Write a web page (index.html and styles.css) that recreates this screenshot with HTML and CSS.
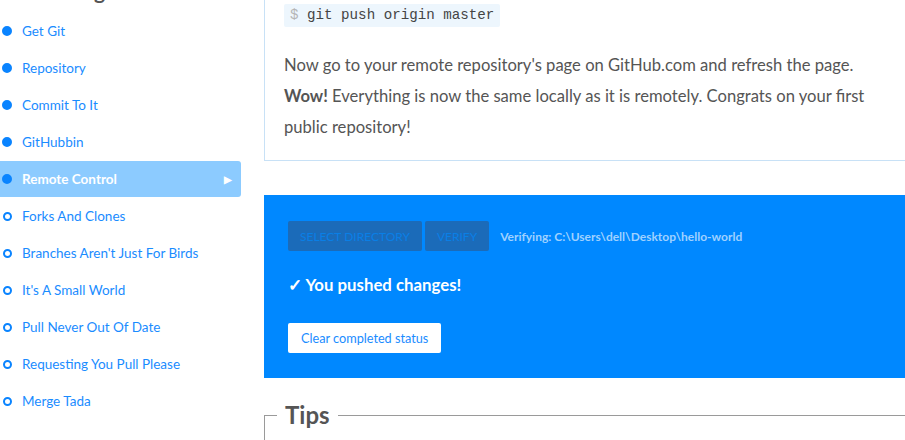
FILE: index.html
```html
<!DOCTYPE html>
<html>
<head>
<meta charset="utf-8">
<link rel="stylesheet" href="styles.css">
</head>
<body>
<div class="page">
  <aside class="sidebar">
    <h2 class="side-title">Challenges</h2>
    <ul class="chapters">
      <li class="chapter done"><span class="dot"></span><span class="label">Get Git</span></li>
      <li class="chapter done"><span class="dot"></span><span class="label">Repository</span></li>
      <li class="chapter done"><span class="dot"></span><span class="label">Commit To It</span></li>
      <li class="chapter done"><span class="dot"></span><span class="label">GitHubbin</span></li>
      <li class="chapter done current"><span class="dot"></span><span class="label">Remote Control</span><span class="arrow">&#9654;</span></li>
      <li class="chapter"><span class="dot"></span><span class="label">Forks And Clones</span></li>
      <li class="chapter"><span class="dot"></span><span class="label">Branches Aren't Just For Birds</span></li>
      <li class="chapter"><span class="dot"></span><span class="label">It's A Small World</span></li>
      <li class="chapter"><span class="dot"></span><span class="label">Pull Never Out Of Date</span></li>
      <li class="chapter"><span class="dot"></span><span class="label">Requesting You Pull Please</span></li>
      <li class="chapter"><span class="dot"></span><span class="label">Merge Tada</span></li>
    </ul>
  </aside>
  <main class="main">
    <section class="lesson">
      <code class="cmd"><span class="prompt">$</span> git push origin master</code>
      <p class="text">Now go to your remote repository's page on GitHub.com and refresh the page.<br><strong>Wow!</strong> Everything is now the same locally as it is remotely. Congrats on your first<br>public repository!</p>
    </section>
    <section class="verify">
      <div class="verify-row">
        <button class="btn-dim">SELECT DIRECTORY</button>
        <button class="btn-dim">VERIFY</button>
        <span class="verify-path">Verifying: C:\Users\dell\Desktop\hello-world</span>
      </div>
      <div class="result">&#10003; You pushed changes!</div>
      <button class="btn-clear">Clear completed status</button>
    </section>
    <fieldset class="tips">
      <legend class="tips-title">Tips</legend>
      <div class="tips-body"></div>
    </fieldset>
  </main>
</div>
</body>
</html>
```
FILE: styles.css
```css
html, body {
  margin: 0;
  padding: 0;
  overflow: hidden;
  background: #fff;
}
body {
  font-family: Lato, "Open Sans", sans-serif;
  width: 905px;
  height: 440px;
}
.page {
  display: grid;
  grid-template-columns: 241px 1fr;
  column-gap: 23px;
}
.sidebar {
  display: flex;
  flex-direction: column;
}
.side-title {
  margin: -27px 0 0 0;
  padding-left: 24px;
  height: 40px;
  font-size: 21px;
  font-weight: 700;
  color: #555;
  line-height: 36px;
}
.chapters {
  list-style: none;
  margin: 0;
  padding: 0;
  display: flex;
  flex-direction: column;
  gap: 1px;
}
.chapter {
  height: 36px;
  display: flex;
  align-items: center;
  color: #1a8cff;
  font-size: 13.5px;
  border-radius: 0 3px 3px 0;
}
.dot {
  width: 9px;
  height: 9px;
  border-radius: 50%;
  box-sizing: border-box;
  border: 2px solid #0a84ff;
  margin-left: 3px;
  margin-right: 10px;
  flex: none;
}
.chapter.done .dot {
  background: #0a84ff;
  width: 10px;
  height: 10px;
  margin-left: 2px;
}
.chapter.current {
  background: #8ccbff;
  color: #fff;
  font-weight: 700;
}
.label {
  flex: 1;
}
.arrow {
  font-size: 10px;
  margin-right: 9px;
  color: #fff;
}
.main {
  display: flex;
  flex-direction: column;
}
.lesson {
  border-left: 1px solid #c8e1f6;
  border-bottom: 1px solid #c8e1f6;
  padding: 3px 0 17px 19px;
}
.cmd {
  display: inline-block;
  background: #edf6fd;
  font-family: "Liberation Mono", monospace;
  font-size: 14.2px;
  color: #444;
  padding: 3px 6px;
  line-height: 17px;
  border-radius: 2px;
}
.prompt {
  color: #b5b5b5;
}
.text {
  margin: 23px 0 0 0;
  font-size: 16.6px;
  line-height: 31px;
  color: #555;
}
.text strong {
  font-weight: 700;
}
.verify {
  margin-top: 34px;
  background: #0088ff;
  padding: 26px 24px 25px 24px;
  display: flex;
  flex-direction: column;
  align-items: flex-start;
}
.verify-row {
  display: flex;
  align-items: center;
  gap: 3px;
}
.btn-dim {
  height: 30px;
  border: none;
  border-radius: 2px;
  background: #1b6bb9;
  color: #0a7fe6;
  font-family: Lato, sans-serif;
  font-size: 12px;
  padding: 0 12px;
}
.verify-path {
  margin-left: 8px;
  color: #9fd1ff;
  font-size: 12px;
  font-weight: 700;
}
.result {
  margin-top: 23px;
  color: #fff;
  font-size: 16.8px;
  font-weight: 700;
  line-height: 22px;
}
.btn-clear {
  margin-top: 27px;
  height: 30px;
  border: none;
  border-radius: 2px;
  background: #fff;
  color: #1a8cff;
  font-family: Lato, sans-serif;
  font-size: 12.7px;
  padding: 0 13px;
}
.tips {
  margin: 22px 0 0 0;
  border: none;
  border-top: 1px solid #9a9a9a;
  border-left: 1px solid #9a9a9a;
  padding: 0 12px;
  min-width: 0;
}
.tips-title {
  font-size: 24px;
  font-weight: 700;
  color: #555;
  padding: 0 8px;
  line-height: 30px;
}
.tips-body {
  height: 40px;
}
```
